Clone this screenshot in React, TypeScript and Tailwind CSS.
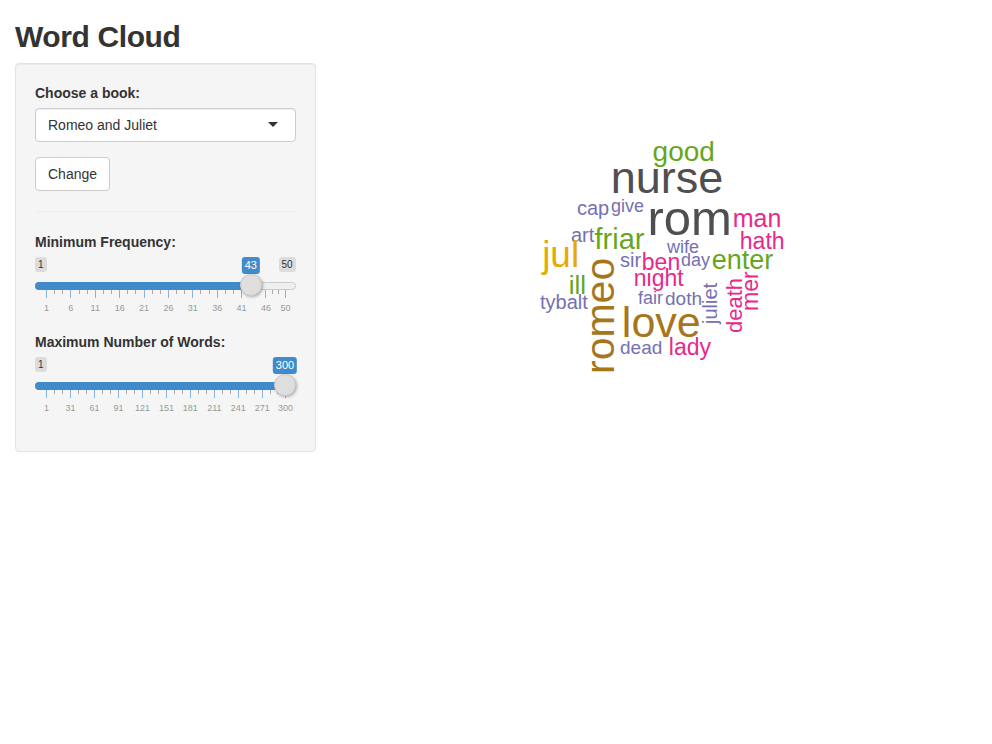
import React from "react";

type Word = { t: string; x: number; y: number; s: number; c: string; r?: boolean };

const G = "#4f4f4f";
const GR = "#66a61e";
const P = "#7570b3";
const M = "#e7298a";
const Y = "#e6ab02";
const B = "#a6761d";

// horizontal: x = ink left, y = baseline (page coords)
// rotated: x = baseline x, y = ink bottom (page coords)
const words: Word[] = [
  { t: "good", x: 654, y: 162, s: 28, c: GR },
  { t: "nurse", x: 613, y: 193, s: 45, c: G },
  { t: "rom", x: 650, y: 235, s: 49, c: G },
  { t: "cap", x: 578, y: 215, s: 20, c: P },
  { t: "give", x: 612, y: 212, s: 18, c: P },
  { t: "man", x: 734, y: 227, s: 25, c: M },
  { t: "art", x: 572, y: 242, s: 20, c: P },
  { t: "friar", x: 596, y: 250, s: 29, c: GR },
  { t: "wife", x: 668, y: 253, s: 18, c: P },
  { t: "hath", x: 741, y: 249, s: 23, c: M },
  { t: "jul", x: 544, y: 267, s: 37, c: Y },
  { t: "sir", x: 621, y: 267, s: 20, c: P },
  { t: "ben", x: 643, y: 270, s: 23, c: M },
  { t: "day", x: 682, y: 266, s: 18, c: P },
  { t: "enter", x: 713, y: 270, s: 27, c: GR },
  { t: "ill", x: 570, y: 294, s: 26, c: GR },
  { t: "night", x: 635, y: 286, s: 23, c: M },
  { t: "tybalt", x: 541, y: 309, s: 20, c: P },
  { t: "fair", x: 639, y: 304, s: 18, c: P },
  { t: "doth", x: 666, y: 305, s: 19, c: P },
  { t: "love", x: 624, y: 337, s: 43, c: B },
  { t: "dead", x: 621, y: 354, s: 19, c: P },
  { t: "lady", x: 670, y: 355, s: 23, c: M },
  { t: "romeo", x: 615, y: 372, s: 41, c: B, r: true },
  { t: "juliet", x: 717, y: 323, s: 20, c: P, r: true },
  { t: "death", x: 743, y: 332, s: 22, c: M, r: true },
  { t: "mer", x: 758, y: 310, s: 23, c: M, r: true },
];

const OX = 345.67;
const OY = 63;

function WordCloud() {
  return (
    <div className="relative h-[400px] w-full">
      {words.map((w) => {
        const style: React.CSSProperties = w.r
          ? {
              left: w.x - 0.8465 * w.s - OX,
              top: w.y + 0.05 * w.s - OY,
              fontSize: w.s,
              color: w.c,
              transform: "rotate(-90deg)",
              transformOrigin: "0 0",
            }
          : {
              left: w.x - 0.05 * w.s - OX,
              top: w.y - 0.8465 * w.s - OY,
              fontSize: w.s,
              color: w.c,
            };
        return (
          <span key={w.t} className="absolute whitespace-nowrap leading-none" style={style}>
            {w.t}
          </span>
        );
      })}
    </div>
  );
}

function Slider({ min, max, value, majors }: { min: number; max: number; value: number; majors: number[] }) {
  const pos = (v: number) => 11 + ((v - min) / (max - min)) * 239;
  const hx = pos(value);
  const minors: number[] = [];
  for (let i = 0; i < majors.length - 1; i++) {
    const a = pos(majors[i]);
    const b = pos(majors[i + 1]);
    minors.push(a + (b - a) / 3, a + ((b - a) * 2) / 3);
  }
  return (
    <div className="relative h-[60px]">
      <div className="flex justify-between">
        <span className="rounded-[3px] bg-black/10 px-[3px] py-px text-[10px] leading-[1.333] text-[#333]">{min}</span>
        {value !== max && (
          <span className="rounded-[3px] bg-black/10 px-[3px] py-px text-[10px] leading-[1.333] text-[#333]">{max}</span>
        )}
      </div>
      <span
        className="absolute top-0 -translate-x-1/2 rounded-[3px] bg-[#428bca] px-[3px] py-px text-[11px] leading-[1.333] text-white"
        style={{ left: hx }}
      >
        {value}
      </span>
      <div className="absolute left-0 right-0 top-[25px] h-[8px] rounded-full border border-[#cccccc] bg-[#efefef]" />
      <div className="absolute left-0 top-[25px] h-[8px] rounded-l-full bg-[#428bca]" style={{ width: hx }} />
      <div className="absolute left-0 right-0 top-[33px] h-[27px]">
        {majors.map((v) => (
          <div key={"M" + v} className="absolute top-0 h-[8px] w-px bg-[#428bca]/60" style={{ left: pos(v) }} />
        ))}
        {minors.map((x, i) => (
          <div key={"m" + i} className="absolute top-0 h-[4px] w-px bg-[#aaaaaa]" style={{ left: x }} />
        ))}
        {majors.map((v) => (
          <span
            key={"t" + v}
            className="absolute bottom-[4px] -translate-x-1/2 whitespace-nowrap text-[9px] leading-[9px] text-[#999999]"
            style={{ left: pos(v) + 0.5 }}
          >
            {v}
          </span>
        ))}
      </div>
      <div
        className="absolute top-[17px] h-[22px] w-[22px] rounded-full border border-[#cccccc] bg-[#dedede] shadow-[1px_1px_3px_rgba(0,0,0,0.3)]"
        style={{ left: hx - 11 }}
      />
    </div>
  );
}

export default function App() {
  const m1 = [1, 6, 11, 16, 21, 26, 31, 36, 41, 46, 50];
  const m2 = [1, 31, 61, 91, 121, 151, 181, 211, 241, 271, 300];
  return (
    <div className="bg-white px-[15px] font-['Liberation_Sans',Arial,sans-serif] text-[14px] leading-[1.42857] text-[#333333]">
      <h2 className="mb-[10px] mt-[20px] text-[30px] font-bold leading-[1.1] tracking-[-0.4px]">Word Cloud</h2>
      <div className="-mx-[15px] flex">
        <div className="w-1/3 px-[15px]">
          <div className="flex flex-col rounded-[4px] border border-[#e3e3e3] bg-[#f5f5f5] p-[19px] shadow-[inset_0_1px_1px_rgba(0,0,0,0.05)]">
            <div className="mb-[15px]">
              <label className="mb-[5px] block translate-y-px font-bold">Choose a book:</label>
              <div className="relative flex h-[34px] items-center rounded-[4px] border border-[#cccccc] bg-white px-[12px] shadow-[inset_0_1px_1px_rgba(0,0,0,0.075)]">
                <span className="translate-y-px">Romeo and Juliet</span>
                <span className="absolute right-[17px] top-1/2 -mt-[3px] h-0 w-0 border-x-[5px] border-t-[5px] border-x-transparent border-t-[#333333]" />
              </div>
            </div>
            <div>
              <button className="inline-flex h-[34px] items-center rounded-[4px] border border-[#cccccc] bg-white px-[12px] text-[14px] text-[#333333]">
                <span className="translate-y-px">Change</span>
              </button>
            </div>
            <hr className="my-[20px] border-[#eeeeee]" />
            <div className="mb-[15px]">
              <label className="mb-[5px] block translate-y-px font-bold">Minimum Frequency:</label>
              <Slider min={1} max={50} value={43} majors={m1} />
            </div>
            <div className="mb-[15px]">
              <label className="mb-[5px] block translate-y-px font-bold">Maximum Number of Words:</label>
              <Slider min={1} max={300} value={300} majors={m2} />
            </div>
          </div>
        </div>
        <div className="w-2/3 px-[15px]">
          <WordCloud />
        </div>
      </div>
    </div>
  );
}
